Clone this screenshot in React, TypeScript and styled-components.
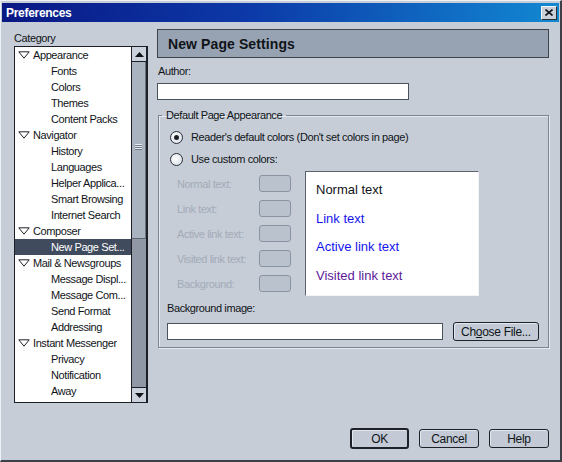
import React from 'react';
import styled, { createGlobalStyle } from 'styled-components';

const GlobalStyle = createGlobalStyle`
  html, body {
    margin: 0;
    padding: 0;
  }
  body {
    width: 562px;
    height: 462px;
    overflow: hidden;
    font-family: "Liberation Sans", Arial, sans-serif;
    font-size: 11px;
    letter-spacing: -0.4px;
    color: #101418;
  }
`;

const Window = styled.div`
  width: 562px;
  height: 462px;
  box-sizing: border-box;
  background: #c6cdd7;
  border-top: 1px solid #eef1f5;
  border-left: 1px solid #eef1f5;
  border-right: 2px solid #3c4148;
  border-bottom: 2px solid #3c4148;
  padding: 2px 1px 0 1px;
  display: flex;
  flex-direction: column;
`;

const TitleBar = styled.div`
  height: 19px;
  flex: 0 0 19px;
  background: linear-gradient(to right, #0a1884 0%, #0c3aa8 45%, #1288d2 100%);
  display: flex;
  align-items: center;
  justify-content: space-between;
  padding: 0 2px 0 4px;
`;

const Title = styled.span`
  color: #ffffff;
  font-weight: bold;
  font-size: 12px;
  letter-spacing: -0.3px;
`;

const CloseButton = styled.div`
  width: 16px;
  height: 14px;
  box-sizing: border-box;
  background: #c9d0d9;
  border-top: 1px solid #f4f6f8;
  border-left: 1px solid #f4f6f8;
  border-right: 1px solid #2a2e34;
  border-bottom: 1px solid #2a2e34;
  display: flex;
  align-items: center;
  justify-content: center;
`;

const Body = styled.div`
  flex: 1;
  display: flex;
  gap: 9px;
  padding: 7px 10px 0 12px;
`;

const Sidebar = styled.div`
  width: 134px;
  display: flex;
  flex-direction: column;
`;

const Label = styled.div<{ $disabled?: boolean }>`
  line-height: 14px;
  color: ${(p) => (p.$disabled ? '#a3abb7' : '#101418')};
`;

const CategoryLabel = styled(Label)`
  margin: 2px 0 1px;
`;

const ListBox = styled.div`
  height: 357px;
  box-sizing: border-box;
  border: 1px solid #1c2026;
  border-right-width: 2px;
  background: #ffffff;
  display: flex;
`;

const Rows = styled.div`
  flex: 1;
  overflow: hidden;
`;

const Row = styled.div<{ $level: number; $selected?: boolean }>`
  height: 16px;
  line-height: 16px;
  white-space: nowrap;
  display: flex;
  align-items: center;
  padding-left: ${(p) => (p.$level ? 36 : 3)}px;
  background: ${(p) => (p.$selected ? '#404b5e' : 'transparent')};
  color: ${(p) => (p.$selected ? '#ffffff' : '#101418')};
`;

const Twisty = styled.svg`
  width: 12px;
  height: 8px;
  margin-right: 3px;
  flex: 0 0 12px;
`;

const ScrollBar = styled.div`
  width: 14px;
  border-left: 1px solid #1c2026;
  display: flex;
  flex-direction: column;
`;

const ScrollButton = styled.div<{ $down?: boolean }>`
  height: 14px;
  flex: 0 0 14px;
  background: #cbd2db;
  border-top: ${(p) => (p.$down ? '1px solid #1c2026' : 'none')};
  border-bottom: ${(p) => (p.$down ? 'none' : '1px solid #1c2026')};
  display: flex;
  align-items: center;
  justify-content: center;
`;

const Thumb = styled.div`
  flex: 0 0 176px;
  background: #a9b2bf;
  border-right: 1px solid #6c7582;
  border-bottom: 1px solid #5c6470;
  display: flex;
  align-items: center;
  justify-content: center;
`;

const Grip = styled.div`
  width: 7px;
  height: 6px;
  background: repeating-linear-gradient(
    to bottom,
    #e8ecf2 0px,
    #e8ecf2 1px,
    #6f7886 1px,
    #6f7886 2px
  );
  margin-top: -6px;
`;

const Track = styled.div`
  flex: 1;
  background: #8f98a4;
`;

const Main = styled.div`
  width: 392px;
  display: flex;
  flex-direction: column;
`;

const Header = styled.div`
  height: 29px;
  box-sizing: border-box;
  background: #97a3b3;
  border: 1px solid #3e444c;
  display: flex;
  align-items: center;
  padding-left: 10px;
  font-size: 14px;
  font-weight: bold;
  letter-spacing: 0.1px;
  color: #101418;
`;

const FieldLabel = styled(Label)`
  margin: 6px 0 5px 1px;
`;

const TextField = styled.div<{ $width: number }>`
  width: ${(p) => p.$width}px;
  height: 17px;
  box-sizing: border-box;
  background: #ffffff;
  border: 1px solid #4a525e;
`;

const Group = styled.fieldset`
  margin: 8px 0 0 1px;
  padding: 4px 8px 8px 8px;
  width: 391px;
  height: 240px;
  box-sizing: border-box;
  border: 1px solid #7c8490;
  box-shadow: inset 1px 1px 0 #e6eaf0, 1px 1px 0 #e6eaf0;
`;

const Legend = styled.legend`
  padding: 0 4px;
  margin-left: -5px;
  line-height: 14px;
`;

const RadioRow = styled.div`
  display: flex;
  align-items: center;
  height: 22px;
  padding-left: 3px;
`;

const Radio = styled.div<{ $checked?: boolean }>`
  width: 13px;
  height: 13px;
  box-sizing: border-box;
  border-radius: 50%;
  border: 1px solid #2a3038;
  background: radial-gradient(circle at 40% 40%, #ffffff 0%, #dfe5ec 70%);
  margin-right: 8px;
  display: flex;
  align-items: center;
  justify-content: center;
  &::after {
    content: '';
    width: 5px;
    height: 5px;
    border-radius: 50%;
    background: ${(p) => (p.$checked ? '#1c2026' : 'transparent')};
  }
`;

const ColorArea = styled.div`
  display: flex;
  margin-top: 1px;
  padding-left: 10px;
`;

const ColorList = styled.div`
  display: flex;
  flex-direction: column;
  gap: 8px;
  margin-top: 4px;
  width: 114px;
`;

const ColorRow = styled.div`
  display: flex;
  align-items: center;
  justify-content: space-between;
  height: 17px;
`;

const Swatch = styled.div`
  width: 32px;
  height: 17px;
  box-sizing: border-box;
  border-radius: 3px;
  border: 1px solid #8a93a2;
  background: #bac2ce;
`;

const Preview = styled.div`
  margin-left: 14px;
  width: 174px;
  height: 125px;
  box-sizing: border-box;
  background: #ffffff;
  border-top: 1px solid #5a6270;
  border-left: 1px solid #5a6270;
  border-right: 1px solid #f2f4f7;
  border-bottom: 1px solid #f2f4f7;
  padding: 4px 0 0 10px;
`;

const PreviewText = styled.div<{ $color: string }>`
  font-size: 13px;
  letter-spacing: 0;
  line-height: 28.5px;
  color: ${(p) => p.$color};
`;

const BgLabel = styled(Label)`
  margin: 5px 0 7px;
`;

const FileRow = styled.div`
  display: flex;
  align-items: center;
  gap: 10px;
`;

const Button = styled.div<{ $default?: boolean; $width: number }>`
  width: ${(p) => p.$width}px;
  height: ${(p) => (p.$default ? 21 : 19)}px;
  box-sizing: border-box;
  border: ${(p) => (p.$default ? '2px' : '1px')} solid #1e2228;
  border-radius: 3px;
  background: #c3cad5;
  box-shadow: inset 1px 1px 0 #e3e8ee;
  display: flex;
  align-items: center;
  justify-content: center;
  font-size: 12px;
  letter-spacing: -0.3px;
`;

const Footer = styled.div`
  display: flex;
  justify-content: flex-end;
  align-items: center;
  gap: 10px;
  padding: 0 10px 11px 0;
`;

const categories: { label: string; level: number; selected?: boolean }[] = [
  { label: 'Appearance', level: 0 },
  { label: 'Fonts', level: 1 },
  { label: 'Colors', level: 1 },
  { label: 'Themes', level: 1 },
  { label: 'Content Packs', level: 1 },
  { label: 'Navigator', level: 0 },
  { label: 'History', level: 1 },
  { label: 'Languages', level: 1 },
  { label: 'Helper Applica...', level: 1 },
  { label: 'Smart Browsing', level: 1 },
  { label: 'Internet Search', level: 1 },
  { label: 'Composer', level: 0 },
  { label: 'New Page Set...', level: 1, selected: true },
  { label: 'Mail & Newsgroups', level: 0 },
  { label: 'Message Displ...', level: 1 },
  { label: 'Message Com...', level: 1 },
  { label: 'Send Format', level: 1 },
  { label: 'Addressing', level: 1 },
  { label: 'Instant Messenger', level: 0 },
  { label: 'Privacy', level: 1 },
  { label: 'Notification', level: 1 },
  { label: 'Away', level: 1 },
];

const colorRows = ['Normal text:', 'Link text:', 'Active link text:', 'Visited link text:', 'Background:'];

const Arrow: React.FC<{ down?: boolean }> = ({ down }) => (
  <svg width="9" height="5" viewBox="0 0 9 5">
    <polygon points={down ? '0,0 9,0 4.5,5' : '0,5 9,5 4.5,0'} fill="#101418" />
  </svg>
);

const App: React.FC = () => {
  return (
    <Window>
      <GlobalStyle />
      <TitleBar>
        <Title>Preferences</Title>
        <CloseButton>
          <svg width="8" height="7" viewBox="0 0 8 7">
            <path d="M0.5 0.5 L7.5 6.5 M7.5 0.5 L0.5 6.5" stroke="#101418" strokeWidth="1.6" />
          </svg>
        </CloseButton>
      </TitleBar>
      <Body>
        <Sidebar>
          <CategoryLabel>Category</CategoryLabel>
          <ListBox>
            <Rows>
              {categories.map((c) => (
                <Row key={c.label} $level={c.level} $selected={c.selected}>
                  {c.level === 0 && (
                    <Twisty viewBox="0 0 12 8">
                      <polygon points="0.8,0.8 11.2,0.8 6,7.2" fill="#ffffff" stroke="#1c2026" strokeWidth="1" />
                    </Twisty>
                  )}
                  {c.label}
                </Row>
              ))}
            </Rows>
            <ScrollBar>
              <ScrollButton>
                <Arrow />
              </ScrollButton>
              <Thumb>
                <Grip />
              </Thumb>
              <Track />
              <ScrollButton $down>
                <Arrow down />
              </ScrollButton>
            </ScrollBar>
          </ListBox>
        </Sidebar>
        <Main>
          <Header>New Page Settings</Header>
          <FieldLabel>Author:</FieldLabel>
          <TextField $width={252} />
          <Group>
            <Legend>Default Page Appearance</Legend>
            <RadioRow>
              <Radio $checked />
              Reader's default colors (Don't set colors in page)
            </RadioRow>
            <RadioRow>
              <Radio />
              Use custom colors:
            </RadioRow>
            <ColorArea>
              <ColorList>
                {colorRows.map((r) => (
                  <ColorRow key={r}>
                    <Label $disabled>{r}</Label>
                    <Swatch />
                  </ColorRow>
                ))}
              </ColorList>
              <Preview>
                <PreviewText $color="#101418">Normal text</PreviewText>
                <PreviewText $color="#1414ee">Link text</PreviewText>
                <PreviewText $color="#1414ee">Active link text</PreviewText>
                <PreviewText $color="#5c1a9a">Visited link text</PreviewText>
              </Preview>
            </ColorArea>
            <BgLabel>Background image:</BgLabel>
            <FileRow>
              <TextField $width={276} />
              <Button $width={86}>
                Ch<u>o</u>ose File...
              </Button>
            </FileRow>
          </Group>
        </Main>
      </Body>
      <Footer>
        <Button $default $width={59}>OK</Button>
        <Button $width={60}>Cancel</Button>
        <Button $width={60}>Help</Button>
      </Footer>
    </Window>
  );
};

export default App;
